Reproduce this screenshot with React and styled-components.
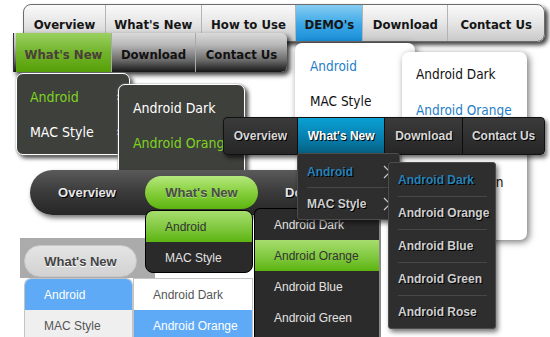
import React from "react";
import styled, { createGlobalStyle } from "styled-components";

const Global = createGlobalStyle`
  html, body { margin: 0; padding: 0; background: #fff; }
  body { width: 550px; height: 337px; overflow: hidden; }
`;

const TAHOMA = `"DejaVu Sans Condensed", "DejaVu Sans", sans-serif`;
const ARIAL = `"Liberation Sans", Arial, sans-serif`;

const Canvas = styled.div`
  position: relative;
  width: 550px;
  height: 337px;
  overflow: hidden;
  background: #fff;
  white-space: nowrap;
`;

/* each demo is a window placed on the free canvas */
const Demo = styled.div`
  position: absolute;
  left: ${(p) => p.$x}px;
  top: ${(p) => p.$y}px;
  z-index: ${(p) => p.$z};
`;

const Drop = styled.div`
  position: absolute;
  left: ${(p) => p.$x}px;
  top: ${(p) => p.$y}px;
  width: ${(p) => p.$w}px;
  height: ${(p) => p.$h}px;
  box-sizing: border-box;
  z-index: ${(p) => p.$z || 1};
`;

/* ---------- Demo 1: light tabs ---------- */
const TabBar = styled.div`
  display: flex;
  width: 522px;
  height: 38px;
  box-sizing: border-box;
  border: 1px solid #6c6c6c;
  border-radius: 8px 8px 8px 0;
  background: linear-gradient(#fafafa, #e6e6e6 50%, #c9c9c9);
  box-shadow: 3px 3px 4px rgba(0, 0, 0, 0.75);
  overflow: hidden;
`;
const Tab = styled.div`
  width: ${(p) => p.$w}px;
  display: flex;
  align-items: center;
  justify-content: center;
  padding-top: 2px;
  font: bold 13px ${TAHOMA};
  font-stretch: condensed;
  color: #151515;
  border-left: ${(p) => (p.$first ? "none" : "1px solid #b4b4b4")};
  background: ${(p) => (p.$active ? "linear-gradient(#86cdf3, #3aa6e6 55%, #1a8fd8)" : "transparent")};
`;
const WhiteDrop = styled(Drop)`
  background: #fff;
  border-radius: 7px;
  box-shadow: 2px 2px 7px rgba(0, 0, 0, 0.55);
  padding-top: ${(p) => p.$pt}px;
`;
const WhiteItem = styled.div`
  height: ${(p) => p.$h}px;
  display: flex;
  align-items: center;
  justify-content: space-between;
  padding: 0 8px 0 ${(p) => p.$pl}px;
  font: ${(p) => p.$size}px ${TAHOMA};
  font-stretch: condensed;
  color: ${(p) => (p.$on ? "#1f80c8" : "#111")};
`;
const SmallArrow = styled.span`
  font: 13px ${TAHOMA};
  color: ${(p) => p.$c};
`;

/* ---------- Demo 2: green + dark ---------- */
const DarkBar = styled.div`
  display: flex;
  width: 274px;
  height: 39px;
  box-sizing: border-box;
  padding-left: 2px;
  border-radius: 0 6px 6px 0;
  background: linear-gradient(#dadada, #b8b8b8 30%, #6a6a6a 70%, #161616);
  box-shadow: 3px 3px 5px rgba(0, 0, 0, 0.8);
  border-left: 1px solid #333;
  overflow: hidden;
`;
const DarkTab = styled.div`
  width: ${(p) => p.$w}px;
  display: flex;
  align-items: center;
  justify-content: center;
  padding-top: 3px;
  font: bold 13px ${TAHOMA};
  font-stretch: condensed;
  color: ${(p) => (p.$active ? "#4a3f3a" : "#111")};
  border-left: ${(p) => (p.$first ? "none" : "1px solid #a9a9a9")};
  background: ${(p) => (p.$active ? "linear-gradient(#9ad160, #72b32c 50%, #56a006)" : "transparent")};
`;
const CharcoalDrop = styled(Drop)`
  background: #3e403c;
  border: 1px solid #fff;
  border-radius: 7px;
  box-shadow: 0 0 2px #999, 3px 3px 4px rgba(0, 0, 0, 0.75);
  padding-top: 5px;
`;
const CharcoalItem = styled.div`
  height: 35px;
  display: flex;
  align-items: center;
  justify-content: space-between;
  padding: 0 8px 0 ${(p) => p.$pl}px;
  font: 14px ${TAHOMA};
  font-stretch: condensed;
  color: ${(p) => (p.$on ? "#7ed321" : "#fff")};
`;

/* ---------- Demo 3: black + teal ---------- */
const BlackBar = styled.div`
  display: flex;
  width: 322px;
  height: 38px;
  box-sizing: border-box;
  border: 1px solid #111;
  border-radius: 4px;
  background: linear-gradient(#3b3b3b, #262626);
  box-shadow: 2px 3px 4px rgba(0, 0, 0, 0.6);
  overflow: hidden;
`;
const BlackTab = styled.div`
  width: ${(p) => p.$w}px;
  display: flex;
  align-items: center;
  justify-content: center;
  font: bold 12px ${ARIAL};
  color: ${(p) => (p.$active ? "#fff" : "#d8d8d8")};
  text-shadow: 1px 1px 0 #000;
  border-left: ${(p) => (p.$first ? "none" : "1px solid #0d0d0d")};
  background: ${(p) => (p.$active ? "linear-gradient(#0aa0d4, #077fae 55%, #055f80)" : "transparent")};
`;
const SlateDrop = styled(Drop)`
  background: #2e2e2e;
  border: 1px solid #4c4c4c;
  border-radius: 3px;
  box-shadow: 2px 3px 5px rgba(0, 0, 0, 0.55);
  padding: ${(p) => p.$pt}px 8px 0 9px;
`;
const SlateItem = styled.div`
  height: ${(p) => p.$h}px;
  box-sizing: border-box;
  display: flex;
  align-items: center;
  justify-content: space-between;
  font: bold 12px ${ARIAL};
  color: ${(p) => (p.$on ? "#2682b8" : "#cfcfcf")};
  text-shadow: 1px 1px 0 #000;
  border-top: ${(p) => (p.$first ? "1px solid transparent" : "1px solid #474747")};
`;
const Chevron = () => (
  <svg width="8" height="14" viewBox="0 0 8 14">
    <polyline points="1,1 7,7 1,13" fill="none" stroke="#cfcfcf" strokeWidth="1.2" />
  </svg>
);

/* ---------- Demo 4: pill ---------- */
const PillBar = styled.div`
  display: flex;
  align-items: center;
  width: 410px;
  height: 45px;
  box-sizing: border-box;
  padding-left: 17px;
  border-radius: 23px;
  background: linear-gradient(#5a5a5a, #3a3a3a 50%, #262626);
  box-shadow: 2px 3px 5px rgba(0, 0, 0, 0.55);
`;
const PillItem = styled.div`
  width: ${(p) => p.$w}px;
  margin-right: ${(p) => p.$mr}px;
  height: 33px;
  display: flex;
  align-items: center;
  justify-content: ${(p) => (p.$left ? "flex-start" : "center")};
  padding-left: ${(p) => p.$pl || 0}px;
  font: bold 13px ${ARIAL};
  border-radius: 17px;
  color: ${(p) => (p.$active ? "#4a4a4a" : "#e6e6e6")};
  text-shadow: ${(p) => (p.$active ? "0 1px 0 rgba(255,255,255,0.35)" : "1px 1px 0 #000")};
  background: ${(p) => (p.$active ? "linear-gradient(#b6e87e, #86cf3c 50%, #5cb410)" : "transparent")};
`;
const GreenDrop = styled(Drop)`
  background: #2a2a2a;
  border: 1px solid #000;
  border-radius: 8px;
  overflow: hidden;
`;
const GreenItem = styled.div`
  height: ${(p) => p.$h}px;
  display: flex;
  align-items: center;
  padding-left: 19px;
  font: 12px ${ARIAL};
  color: ${(p) => (p.$on ? "#333" : "#e2e2e2")};
  background: ${(p) => (p.$on ? "linear-gradient(#a7dd6e, #7cc63a 60%, #5cb410)" : "transparent")};
`;
const GreenSub = styled(Drop)`
  background: #2b2b2b;
  border: 1px solid #000;
  border-right: 2px solid #8a8a8a;
  border-radius: 6px 0 0 0;
  overflow: hidden;
`;

/* ---------- Demo 5: mac style ---------- */
const GreyBand = styled.div`
  width: 135px;
  height: 40px;
  box-sizing: border-box;
  padding: 7px 0 0 4px;
  background: #ababab;
`;
const MacPill = styled.div`
  width: 113px;
  height: 32px;
  box-sizing: border-box;
  display: flex;
  align-items: center;
  justify-content: center;
  border: 1px solid #c9c9c9;
  border-radius: 16px;
  background: linear-gradient(#e4e4e4, #d2d2d2);
  font: bold 13px ${ARIAL};
  color: #444;
  text-shadow: 0 1px 0 #fff;
`;
const MacDrop = styled(Drop)`
  border: 1px solid #c4c4c4;
  border-bottom: none;
  border-radius: ${(p) => (p.$first ? "7px 7px 0 0" : "0")};
  background: #fff;
  overflow: hidden;
`;
const MacItem = styled.div`
  height: 31px;
  display: flex;
  align-items: center;
  padding-left: 19px;
  font: 12px ${ARIAL};
  color: ${(p) => (p.$on ? "#fff" : "#555")};
  background: ${(p) => (p.$on ? "#5eaaf6" : p.$bg)};
`;

const androids = ["Android Dark", "Android Orange", "Android Blue", "Android Green", "Android Rose"];

export default function App() {
  return (
    <Canvas>
      <Global />

      {/* Demo 1 */}
      <Demo $x={23} $y={4} $z={1}>
        <TabBar>
          {[
            ["Overview", 82],
            ["What's New", 96],
            ["How to Use", 95],
            ["DEMO's", 67],
            ["Download", 85],
            ["Contact Us", 97],
          ].map(([t, w], i) => (
            <Tab key={t} $w={w} $first={i === 0} $active={t === "DEMO's"}>
              {t}
            </Tab>
          ))}
        </TabBar>
        <WhiteDrop $x={272} $y={39} $w={120} $h={84} $pt={5}>
          <WhiteItem $h={35} $pl={15} $size={13.5} $on>
            Android <SmallArrow $c="#555">›</SmallArrow>
          </WhiteItem>
          <WhiteItem $h={35} $pl={15} $size={13.5}>
            MAC Style <SmallArrow $c="#555">›</SmallArrow>
          </WhiteItem>
        </WhiteDrop>
        <WhiteDrop $x={379} $y={48} $w={125} $h={188} $pt={4} $z={2}>
          {androids.map((a, i) => (
            <WhiteItem key={a} $h={36} $pl={14} $size={13.5} $on={i === 1}>
              {a}
            </WhiteItem>
          ))}
        </WhiteDrop>
      </Demo>

      {/* Demo 2 */}
      <Demo $x={13} $y={33} $z={2}>
        <DarkBar>
          <DarkTab $w={96} $first $active>What's New</DarkTab>
          <DarkTab $w={84}>Download</DarkTab>
          <DarkTab $w={92}>Contact Us</DarkTab>
        </DarkBar>
        <CharcoalDrop $x={3} $y={40} $w={114} $h={82}>
          <CharcoalItem $pl={13} $on>
            Android <SmallArrow $c="#fff">›</SmallArrow>
          </CharcoalItem>
          <CharcoalItem $pl={13}>
            MAC Style <SmallArrow $c="#fff">›</SmallArrow>
          </CharcoalItem>
        </CharcoalDrop>
        <CharcoalDrop $x={105} $y={51} $w={127} $h={120} $z={2}>
          <CharcoalItem $pl={14}>Android Dark</CharcoalItem>
          <CharcoalItem $pl={14} $on>Android Orange</CharcoalItem>
        </CharcoalDrop>
      </Demo>

      {/* Demo 5 */}
      <Demo $x={20} $y={238} $z={3}>
        <GreyBand>
          <MacPill>What's New</MacPill>
        </GreyBand>
        <MacDrop $x={4} $y={40} $w={109} $h={64} $first>
          <MacItem $on>Android</MacItem>
          <MacItem $bg="#efefef">MAC Style</MacItem>
        </MacDrop>
        <MacDrop $x={113} $y={40} $w={120} $h={64}>
          <MacItem $bg="#fff">Android Dark</MacItem>
          <MacItem $on>Android Orange</MacItem>
        </MacDrop>
      </Demo>

      {/* Demo 4 */}
      <Demo $x={30} $y={170} $z={4}>
        <PillBar>
          <PillItem $w={80} $mr={18}>Overview</PillItem>
          <PillItem $w={113} $mr={0} $active>What's New</PillItem>
          <PillItem $w={110} $mr={0} $left $pl={27}>Download</PillItem>
        </PillBar>
        <GreenDrop $x={115} $y={40} $w={108} $h={63}>
          <GreenItem $h={31} $on>Android</GreenItem>
          <GreenItem $h={31}>MAC Style</GreenItem>
        </GreenDrop>
        <GreenSub $x={224} $y={38} $w={127} $h={140}>
          {androids.slice(0, 4).map((a, i) => (
            <GreenItem key={a} $h={31} $on={i === 1}>
              {a}
            </GreenItem>
          ))}
        </GreenSub>
      </Demo>

      {/* Demo 3 */}
      <Demo $x={223} $y={117} $z={5}>
        <BlackBar>
          <BlackTab $w={74} $first>Overview</BlackTab>
          <BlackTab $w={88} $active>What's New</BlackTab>
          <BlackTab $w={78}>Download</BlackTab>
          <BlackTab $w={82}>Contact Us</BlackTab>
        </BlackBar>
        <SlateDrop $x={74} $y={36} $w={103} $h={67} $pt={1}>
          <SlateItem $h={32} $first $on>
            Android <Chevron />
          </SlateItem>
          <SlateItem $h={32}>
            MAC Style <Chevron />
          </SlateItem>
        </SlateDrop>
        <SlateDrop $x={165} $y={45} $w={108} $h={167} $pt={0} $z={2}>
          {androids.map((a, i) => (
            <SlateItem key={a} $h={33} $first={i === 0} $on={i === 0}>
              {a}
            </SlateItem>
          ))}
        </SlateDrop>
      </Demo>
    </Canvas>
  );
}
